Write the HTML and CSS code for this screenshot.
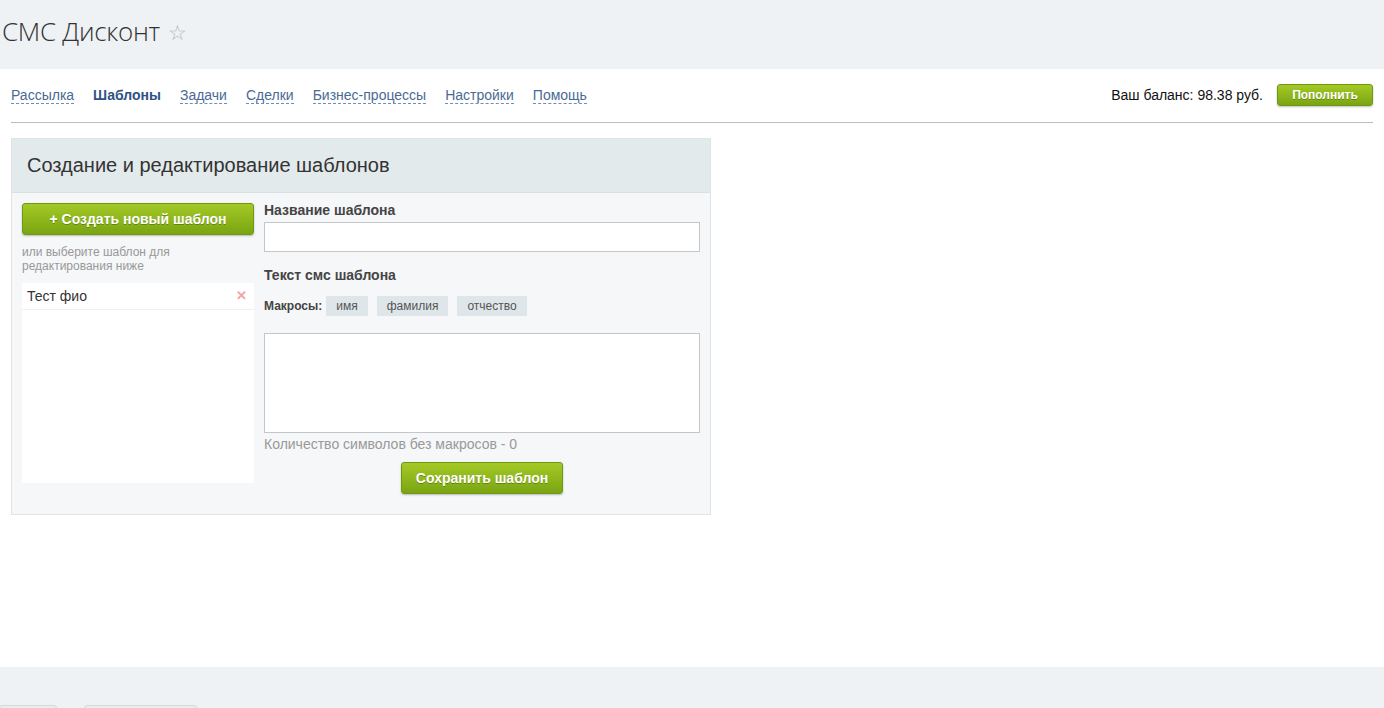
FILE: index.html
```html
<!DOCTYPE html>
<html lang="ru">
<head>
<meta charset="utf-8">
<title>СМС Дисконт</title>
<link rel="stylesheet" href="styles.css">
</head>
<body>
<header class="page-head">
  <h1 class="page-title">СМС Дисконт <span class="star">☆</span></h1>
</header>
<main class="main">
  <div class="topbar">
    <nav class="tabs">
      <a class="tab" href="#">Рассылка</a>
      <a class="tab active" href="#">Шаблоны</a>
      <a class="tab" href="#">Задачи</a>
      <a class="tab" href="#">Сделки</a>
      <a class="tab" href="#">Бизнес-процессы</a>
      <a class="tab" href="#">Настройки</a>
      <a class="tab" href="#">Помощь</a>
    </nav>
    <div class="balance">
      <span class="balance-text">Ваш баланс: 98.38 руб.</span>
      <button class="btn btn-small">Пополнить</button>
    </div>
  </div>
  <div class="rule"></div>
  <section class="panel">
    <div class="panel-head">Создание и редактирование шаблонов</div>
    <div class="panel-body">
      <div class="col-left">
        <button class="btn btn-big">+ Создать новый шаблон</button>
        <div class="hint">или выберите шаблон для редактирования ниже</div>
        <ul class="tpl-list">
          <li class="tpl-item"><span>Тест фио</span><span class="del">✕</span></li>
        </ul>
      </div>
      <div class="col-right">
        <div class="label">Название шаблона</div>
        <input class="field" type="text">
        <div class="label label-2">Текст смс шаблона</div>
        <div class="macros">
          <span class="macros-label">Макросы:</span>
          <span class="macro">имя</span>
          <span class="macro">фамилия</span>
          <span class="macro">отчество</span>
        </div>
        <textarea class="area"></textarea>
        <div class="count">Количество символов без макросов - 0</div>
        <div class="save-row"><button class="btn btn-save">Сохранить шаблон</button></div>
      </div>
    </div>
  </section>
</main>
<footer class="page-foot">
  <span class="foot-btn foot-btn-1"></span>
  <span class="foot-btn foot-btn-2"></span>
</footer>
</body>
</html>
```
FILE: styles.css
```css
* { box-sizing: border-box; }
html, body { margin: 0; padding: 0; }
body {
  font-family: "Liberation Sans", Arial, sans-serif;
  font-size: 14px;
  color: #333;
  background: #fff;
  overflow: hidden;
}
.page-head {
  height: 69px;
  background: #eef2f4;
  padding: 14px 0 0 2px;
}
.page-title {
  margin: 0;
  font-family: "Open Sans", sans-serif;
  font-weight: 300;
  font-size: 26px;
  line-height: 34px;
  color: #333;
  letter-spacing: -0.3px;
}
.star {
  font-family: "DejaVu Sans", sans-serif;
  font-size: 21px;
  color: #b5b8bb;
  vertical-align: 1px;
  margin-left: 2px;
}
.main {
  height: 598px;
  padding: 15px 11px 0;
}
.topbar {
  display: flex;
  align-items: center;
  justify-content: space-between;
  height: 22px;
}
.tabs { display: flex; gap: 19px; }
.tab {
  color: #4a6a94;
  text-decoration: none;
  border-bottom: 1px dashed #6f8db5;
  line-height: 16px;
}
.tab.active {
  font-weight: bold;
  color: #2f5283;
  border-bottom-color: transparent;
}
.balance { display: flex; align-items: center; gap: 14px; }
.balance-text { color: #111; }
.btn {
  border: 1px solid #6f9a0e;
  border-radius: 3px;
  background: linear-gradient(#a4c926, #7aa512);
  color: #fff;
  font-family: "Liberation Sans", Arial, sans-serif;
  font-weight: bold;
  text-shadow: 0 1px 0 rgba(60, 90, 0, 0.5);
  box-shadow: 0 1px 2px rgba(0, 0, 0, 0.25);
  cursor: pointer;
  padding: 0;
}
.btn-small { width: 96px; height: 22px; font-size: 12px; }
.rule {
  margin-top: 16px;
  height: 1px;
  background: #bcbcbc;
}
.panel {
  margin-top: 15px;
  width: 700px;
  border: 1px solid #dfe4e7;
  background: #f5f7f8;
}
.panel-head {
  height: 54px;
  background: #e3eaec;
  border-bottom: 1px solid #d8e0e3;
  padding: 0 15px;
  font-size: 20px;
  line-height: 52px;
  color: #333;
}
.panel-body {
  display: flex;
  gap: 10px;
  padding: 10px 10px 20px;
}
.col-left { width: 232px; flex: none; }
.btn-big { width: 232px; height: 32px; font-size: 14px; }
.hint {
  margin-top: 10px;
  font-size: 12px;
  line-height: 14px;
  color: #999;
  padding-right: 60px;
}
.tpl-list {
  list-style: none;
  margin: 10px 0 0;
  padding: 0;
  height: 200px;
  background: #fff;
}
.tpl-item {
  display: flex;
  justify-content: space-between;
  align-items: center;
  height: 27px;
  padding: 0 7px 1px 5px;
  border-bottom: 1px solid #eef0f1;
  color: #333;
}
.del { color: #f3a3a3; font-size: 13px; font-weight: bold; }
.col-right { flex: 1; }
.label {
  font-weight: bold;
  color: #444;
  line-height: 16px;
  margin-top: -1px;
}
.label-2 { margin-top: 15px; }
.field {
  display: block;
  margin-top: 4px;
  width: 100%;
  height: 30px;
  border: 1px solid #c4c6c8;
  background: #fff;
}
.macros {
  display: flex;
  align-items: center;
  gap: 9px;
  margin-top: 13px;
  height: 20px;
}
.macros-label { font-size: 12px; font-weight: bold; color: #444; margin-right: -5px; }
.macro {
  background: #dfe6e9;
  color: #555;
  font-size: 12px;
  line-height: 20px;
  padding: 0 10px;
}
.area {
  display: block;
  margin-top: 17px;
  width: 100%;
  height: 100px;
  border: 1px solid #c4c6c8;
  background: #fff;
  resize: none;
}
.count {
  margin-top: 3px;
  color: #999;
  line-height: 16px;
}
.save-row {
  display: flex;
  justify-content: center;
  margin-top: 10px;
}
.btn-save { width: 162px; height: 32px; font-size: 14px; }
.page-foot {
  height: 41px;
  background: #eef2f4;
  display: flex;
  gap: 27px;
  padding-top: 38px;
}
.foot-btn {
  display: block;
  height: 12px;
  border: 1px solid #d3d9dc;
  border-radius: 3px;
  background: #e8edef;
}
.foot-btn-1 { width: 58px; margin-left: -1px; }
.foot-btn-2 { width: 113px; }
```
